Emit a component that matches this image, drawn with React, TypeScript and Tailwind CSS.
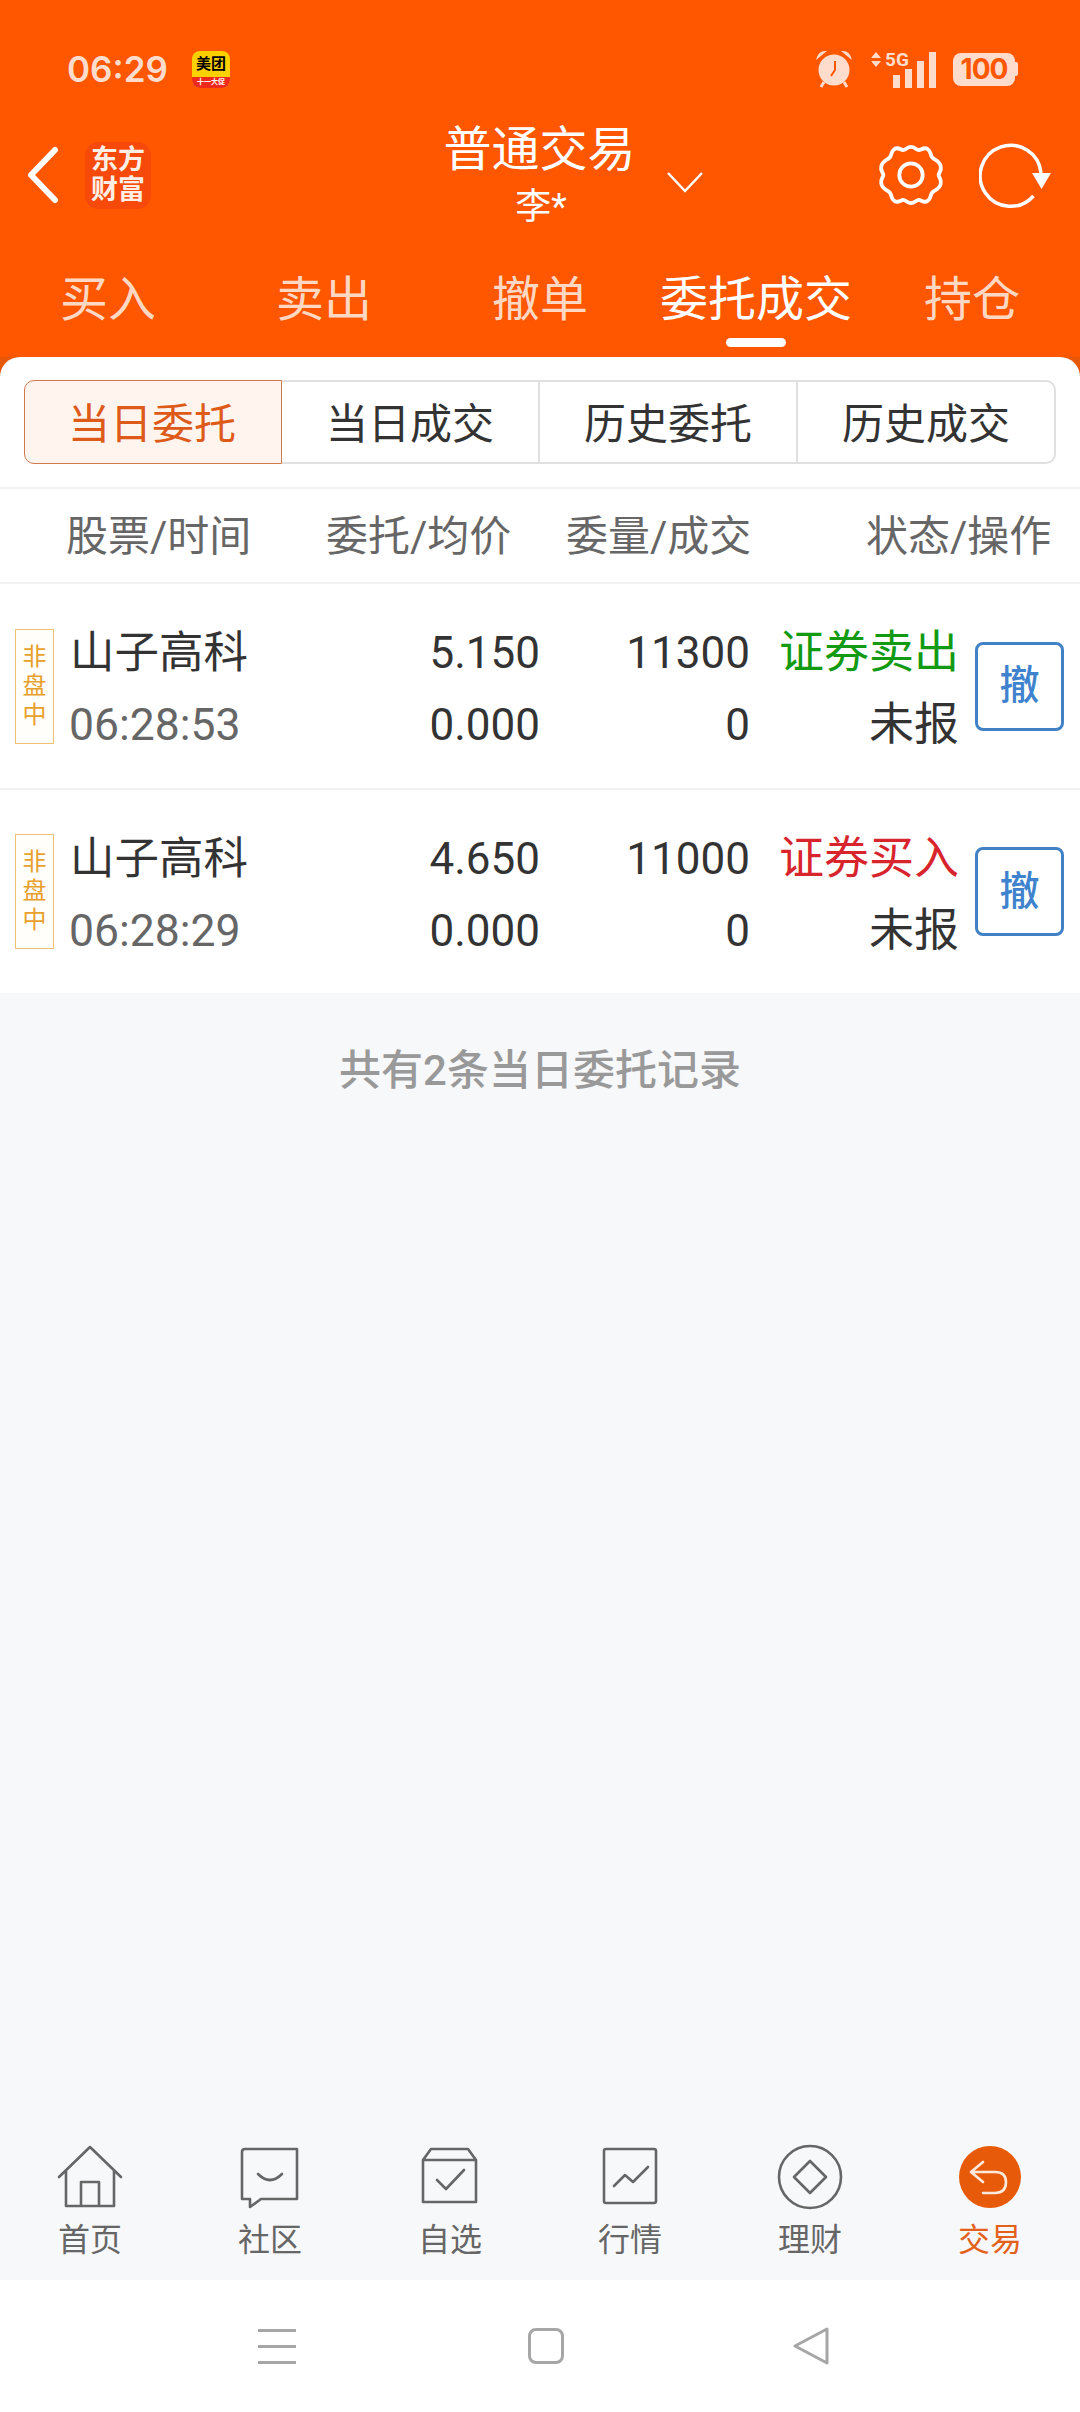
const cjk = "font-['Roboto','Noto_Sans_CJK_SC',sans-serif]";

const topTabs = ['买入', '卖出', '撤单', '委托成交', '持仓'];
const subTabs = ['当日委托', '当日成交', '历史委托', '历史成交'];

const orders = [
  { price: '5.150', time: '06:28:53', vol: '11300', side: '证券卖出', sideClass: 'text-[#119a12]' },
  { price: '4.650', time: '06:28:29', vol: '11000', side: '证券买入', sideClass: 'text-[#d8242c]' },
];

function StatusBar() {
  return (
    <div className="flex items-center h-[48px] mt-[45px] text-[#ffdccb]">
      <span className="ml-[67px] w-[98px] font-['Inter',sans-serif] text-[35px] font-semibold leading-none">06:29</span>
      <div className="ml-[27px] w-[38px] h-[37px] rounded-[8px] overflow-hidden bg-[#fdd000] flex flex-col items-center">
        <span className="text-[15px] leading-[26px] h-[26px] font-bold text-black">美团</span>
        <span className="w-full flex-1 bg-[#ee2a1c] text-white text-[7px] leading-[11px] text-center font-bold">十一大促</span>
      </div>
      <svg className="ml-[584px]" width="40" height="40" viewBox="0 0 40 40" fill="currentColor">
        <circle cx="20" cy="21" r="15.5" />
        <path d="M2 11 Q4 1 13 2 Z M38 11 Q36 1 27 2 Z" />
        <path d="M10 33 L7 38 M30 33 L33 38" stroke="currentColor" strokeWidth="3" />
        <path d="M21 12 V21 L17 27" stroke="#ff5600" strokeWidth="2" fill="none" />
      </svg>
      <div className="relative ml-[17px] w-[65px] h-[37px]">
        <svg className="absolute left-0 top-[1px]" width="10" height="16" viewBox="0 0 10 16" fill="currentColor">
          <path d="M5 0 L10 6 H0 Z M0 9 H10 L5 15 Z" />
        </svg>
        <span className="absolute left-[14px] -top-[1px] font-['Roboto',sans-serif] text-[19px] font-bold leading-[20px]">5G</span>
        <div className="absolute right-0 bottom-0 flex items-end gap-[5px]">
          <div className="w-[7px] h-[13px] bg-[#ffdccb]" />
          <div className="w-[7px] h-[19px] bg-[#ffdccb]" />
          <div className="w-[7px] h-[27px] bg-[#ffdccb]" />
          <div className="w-[7px] h-[36px] bg-[#ffdccb]" />
        </div>
      </div>
      <div className="ml-[17px] flex items-center">
        <div className="w-[62px] h-[33px] rounded-[8px] bg-[#ffdccb] text-[#ff5600] flex items-center justify-center font-['Inter',sans-serif] text-[28px] font-bold leading-none tracking-[-1px]">100</div>
        <div className="w-[3px] h-[14px] bg-[#ffdccb] rounded-r-[2px]" />
      </div>
    </div>
  );
}

function TitleRow() {
  return (
    <div className="flex items-center h-[130px] mt-[17px] text-white">
      <svg className="ml-[26px]" width="34" height="58" viewBox="0 0 34 58" fill="none" stroke="currentColor" strokeWidth="6" strokeLinecap="round" strokeLinejoin="round">
        <path d="M29 4 L5 29 L29 54" />
      </svg>
      <div className="ml-[25px] w-[66px] h-[67px] rounded-[14px] bg-[#f6490a] text-[#ffeee4] flex flex-col items-center justify-center text-[27px] leading-[30px] font-bold">
        <span>东方</span>
        <span>财富</span>
      </div>
      <div className="ml-[282px] w-[216px] flex flex-col items-center relative">
        <span className="text-[48px] leading-[60px] -ml-[3px]">普通交易</span>
        <span className="text-[36px] leading-[46px] mt-[4px]">李*</span>
      </div>
      <svg className="ml-[17px] mt-[13px]" width="38" height="24" viewBox="0 0 38 24" fill="none" stroke="currentColor" strokeWidth="2.5">
        <path d="M2 3 L19 21 L36 3" />
      </svg>
      <svg className="ml-[173px]" width="68" height="68" viewBox="0 0 64 64" fill="none" stroke="currentColor" strokeWidth="3.6">
        <path d="M32 5.5 C36 5.5 37 9 40 8.500 C43 7 46 5.500 48 8 C51 10 50 13 52 15.500 C54 18 59 18 60 24 C61 28 58 30 58 32 C58 34 61 36 60 40 C59 46 54 46 52 48.500 C50 51 51 54 48 56 C46 58.500 43 57 40 55.500 C37 55 36 58.500 32 58.500 C28 58.500 27 55 24 55.500 C21 57 18 58.500 16 56 C13 54 14 51 12 48.500 C10 46 5 46 4 40 C3 36 6 34 6 32 C6 30 3 28 4 24 C5 18 10 18 12 15.500 C14 13 13 10 16 8 C18 5.500 21 7 24 8.500 C27 9 28 5.500 32 5.500 Z" />
        <circle cx="32" cy="32" r="11" />
      </svg>
      <svg className="ml-[34px]" width="74" height="68" viewBox="0 0 74 68" fill="none">
        <path d="M62 32 A30.500 30.500 0 1 0 54.500 55" stroke="currentColor" strokeWidth="3.500" />
        <path d="M53 32 H72 L62.500 48 Z" fill="currentColor" />
      </svg>
    </div>
  );
}

function TopTabs() {
  return (
    <div className="flex h-[117px] pt-[30px] items-start">
      {topTabs.map((t, i) => (
        <div key={t} className="relative flex-1 flex flex-col items-center">
          <span className={`text-[48px] leading-[60px] ${i === 3 ? 'text-white' : 'text-[#ffd8c3]'}`}>{t}</span>
          {i === 3 && <div className="absolute top-[68px] w-[60px] h-[9px] rounded-full bg-white" />}
        </div>
      ))}
    </div>
  );
}

function SubTabs() {
  return (
    <div className="flex mx-[24px] mt-[23px] h-[84px]">
      {subTabs.map((t, i) => (
        <div
          key={t}
          className={`flex-1 flex items-center justify-center pt-[5px] text-[42px] leading-none ${
            i === 0
              ? 'bg-[#fff4ee] border-[1.5px] border-[#cc7a4e] rounded-l-[10px] text-[#dd5a18]'
              : `border-y-2 border-r-2 border-[#e0e0e0] text-[#333] ${i === 3 ? 'rounded-r-[10px]' : ''}`
          }`}
        >
          <span className={i === 0 ? '-ml-[2px]' : ''}>{t}</span>
        </div>
      ))}
    </div>
  );
}

function HeaderRow() {
  return (
    <div className="mt-[23px] h-[97px] pt-[2px] flex items-center border-y-2 border-[#f2f2f2] text-[42px] text-[#666] leading-none">
      <span className="ml-[66px] w-[260px]">股票/时间</span>
      <span className="w-[240px]">委托/均价</span>
      <span className="w-[300px]">委量/成交</span>
      <span>状态/操作</span>
    </div>
  );
}

function OrderRow({ order, first }: { order: (typeof orders)[number]; first: boolean }) {
  return (
    <div className={`flex items-center ${first ? 'h-[206px] border-b-2 border-[#f2f2f2]' : 'h-[203px]'}`}>
      <div className="ml-[15px] w-[39px] h-[115px] border-[1.5px] border-[#ecc173] bg-[#fffefb] flex flex-col items-center justify-center text-[24px] leading-[29px] text-[#e8a02c]">
        <span>非</span>
        <span>盘</span>
        <span>中</span>
      </div>
      <div className="ml-[16px] mt-[6px] w-[200px] flex flex-col gap-[24px]">
        <span className="text-[44.5px] leading-[48px] text-[#333]">山子高科</span>
        <span className="text-[44.5px] leading-[48px] text-[#666] -ml-[1px]">{order.time}</span>
      </div>
      <div className="mt-[6px] w-[270px] flex flex-col gap-[24px] items-end text-[44px] leading-[48px] text-[#333]">
        <span>{order.price}</span>
        <span>0.000</span>
      </div>
      <div className="mt-[6px] w-[210px] flex flex-col gap-[24px] items-end text-[44px] leading-[48px] text-[#333]">
        <span>{order.vol}</span>
        <span>0</span>
      </div>
      <div className="mt-[6px] w-[209px] flex flex-col gap-[24px] items-end text-[45px] leading-[48px] text-[#333]">
        <span className={order.sideClass}>{order.side}</span>
        <span>未报</span>
      </div>
      <div className="ml-[16px] w-[89px] h-[89px] rounded-[8px] border-[3px] border-[#4182c6] flex items-center justify-center text-[40px] font-medium text-[#3f83ce] leading-none">撤</div>
    </div>
  );
}

const navStroke = { fill: 'none', stroke: '#666', strokeWidth: 2.6, strokeLinejoin: 'round' as const, strokeLinecap: 'round' as const };

const bottomTabs = [
  {
    label: '首页',
    icon: (
      <svg width="70" height="66" viewBox="0 0 70 66" {...navStroke}>
        <path d="M4 33 L35 3 L66 33 M11 27 V62 H59 V27 M26 62 V38 H44 V62" />
      </svg>
    ),
  },
  {
    label: '社区',
    icon: (
      <svg width="70" height="66" viewBox="0 0 70 66" {...navStroke}>
        <path d="M10 5 H62 V55 H26 L15 63 V55 H7 V8 Q7 5 10 5 Z" />
        <path d="M23 30 Q35 42 47 30" />
      </svg>
    ),
  },
  {
    label: '自选',
    icon: (
      <svg width="70" height="66" viewBox="0 0 70 66" {...navStroke}>
        <path d="M8 16 L16 5 H53 L61 16 V58 H8 Z M8 16 H61" />
        <path d="M22 36 L31 45 L49 26" />
      </svg>
    ),
  },
  {
    label: '行情',
    icon: (
      <svg width="70" height="66" viewBox="0 0 70 66" {...navStroke}>
        <rect x="9" y="5" width="52" height="54" rx="2" />
        <path d="M19 42 L30 31 L38 38 L53 23" />
      </svg>
    ),
  },
  {
    label: '理财',
    icon: (
      <svg width="70" height="66" viewBox="0 0 70 66" {...navStroke}>
        <circle cx="35" cy="33" r="31" />
        <path d="M35 17 L51 33 L35 49 L19 33 Z" />
      </svg>
    ),
  },
  {
    label: '交易',
    active: true,
    icon: (
      <svg width="70" height="66" viewBox="0 0 70 66" fill="none" stroke="#ffe9dc" strokeWidth="2.6" strokeLinecap="round" strokeLinejoin="round">
        <circle cx="35" cy="33" r="31" fill="#e65a0a" stroke="none" />
        <path d="M28 18 L16 28 L28 38 M16 28 H40 Q51 28 51 38 Q51 49 40 49 H28" />
      </svg>
    ),
  },
];

function BottomTabs() {
  return (
    <div className="flex h-[146px] pt-[10px]">
      {bottomTabs.map((t) => (
        <div key={t.label} className="flex-1 flex flex-col items-center">
          {t.icon}
          <span className={`mt-[8px] text-[32px] leading-[44px] ${t.active ? 'text-[#e4611c]' : 'text-[#666]'}`}>{t.label}</span>
        </div>
      ))}
    </div>
  );
}

function SystemNav() {
  return (
    <div className="h-[132px] bg-white flex items-center justify-center">
      <div className="flex flex-col gap-[13px] w-[38px] ml-[8px]">
        <div className="h-[3px] bg-[#a6a6a6]" />
        <div className="h-[3px] bg-[#a6a6a6]" />
        <div className="h-[3px] bg-[#a6a6a6]" />
      </div>
      <div className="ml-[232px] w-[36px] h-[36px] rounded-[8px] border-[3px] border-[#a6a6a6]" />
      <svg className="ml-[228px]" width="38" height="38" viewBox="0 0 38 38" fill="none" stroke="#a6a6a6" strokeWidth="3" strokeLinejoin="round">
        <path d="M3 19 L35 2 V36 Z" />
      </svg>
    </div>
  );
}

export default function App() {
  return (
    <div className={`w-[1080px] h-[2412px] flex flex-col overflow-hidden bg-[#f7f8fa] ${cjk}`}>
      <header className="h-[357px] bg-[#ff5600] overflow-hidden shrink-0">
        <StatusBar />
        <TitleRow />
        <TopTabs />
      </header>
      <div className="bg-[#e65808] shrink-0">
        <main className="bg-white rounded-t-[20px] h-[636px] overflow-hidden">
          <SubTabs />
          <HeaderRow />
          {orders.map((o, i) => (
            <OrderRow key={o.time} order={o} first={i === 0} />
          ))}
        </main>
      </div>
      <div className="flex-1 flex flex-col items-center">
        <p className="mt-[52px] text-[42px] leading-[52px] font-medium text-[#999]">共有2条当日委托记录</p>
      </div>
      <BottomTabs />
      <SystemNav />
    </div>
  );
}
